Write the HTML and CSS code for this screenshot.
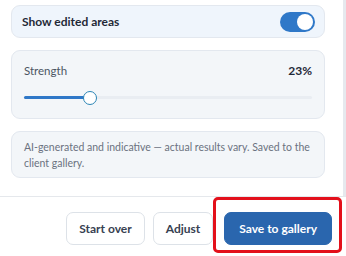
FILE: index.html
```html
<!DOCTYPE html>
<html>
<head>
<meta charset="utf-8">
<link rel="stylesheet" href="styles.css">
</head>
<body>
<div class="panel">
  <div class="body-row">
    <div class="scroll">
      <div class="card card-toggle">
        <span class="toggle-label">Show edited areas</span>
        <span class="switch"><span class="knob"></span></span>
      </div>
      <div class="card card-slider">
        <div class="slider-head">
          <span class="slider-label">Strength</span>
          <span class="slider-value">23%</span>
        </div>
        <div class="track">
          <div class="fill" style="width: 23%"></div>
          <div class="thumb" style="left: 23%"></div>
        </div>
      </div>
      <div class="card card-note">
        AI-generated and indicative — actual results vary. Saved to the client gallery.
      </div>
    </div>
    <div class="scrollbar"></div>
  </div>
  <div class="footer">
    <button class="btn">Start over</button>
    <button class="btn">Adjust</button>
    <button class="btn btn-primary">Save to gallery</button>
    <div class="highlight"></div>
  </div>
</div>
</body>
</html>
```

FILE: styles.css
```css
* { box-sizing: border-box; }
html, body {
  margin: 0;
  padding: 0;
  background: #ffffff;
  font-family: "Lato", "Noto Sans", sans-serif;
  width: 346px;
  height: 256px;
  overflow: hidden;
}
.panel {
  display: flex;
  flex-direction: column;
  height: 256px;
}
.body-row {
  display: flex;
  height: 196px;
}
.scroll {
  flex: 1;
  display: flex;
  flex-direction: column;
  gap: 12px;
  padding: 5px 18px 0 11px;
}
.scrollbar {
  width: 3px;
  background: #e6e9ee;
}
.card {
  border: 1px solid #e3e8ef;
  border-radius: 9px;
  background: #f3f6f9;
}
.card-toggle {
  height: 33px;
  background: #eff5fc;
  display: flex;
  align-items: center;
  justify-content: space-between;
  padding: 0 9px 0 10px;
}
.toggle-label {
  font-size: 12px;
  font-weight: 700;
  color: #1f2937;
}
.switch {
  width: 35px;
  height: 20px;
  border-radius: 10px;
  background: #2f78c8;
  display: flex;
  align-items: center;
  justify-content: flex-end;
  padding: 2px;
}
.knob {
  width: 16px;
  height: 16px;
  border-radius: 50%;
  background: #ffffff;
}
.card-slider {
  height: 69px;
  padding: 12px 12px 0 12px;
}
.slider-head {
  display: flex;
  justify-content: space-between;
  align-items: center;
  height: 15px;
}
.slider-label {
  font-size: 11.5px;
  color: #4b5563;
}
.slider-value {
  font-size: 12px;
  font-weight: 700;
  color: #1f2937;
}
.track {
  position: relative;
  margin-top: 18px;
  height: 3px;
  border-radius: 2px;
  background: #e9edf2;
}
.fill {
  height: 3px;
  border-radius: 2px;
  background: #2f78c8;
}
.thumb {
  position: absolute;
  top: -5.5px;
  width: 14px;
  height: 14px;
  margin-left: -7px;
  border-radius: 50%;
  background: #ffffff;
  border: 1.5px solid #2b85b5;
}
.card-note {
  height: 47px;
  padding: 7px 12px;
  font-size: 10.5px;
  line-height: 16px;
  color: #6b7280;
}
.footer {
  position: relative;
  flex: 1;
  border-top: 1px solid #e5e8ec;
  display: flex;
  justify-content: flex-end;
  align-items: flex-start;
  gap: 8px;
  padding: 15px 14px 0 0;
}
.btn {
  height: 33px;
  padding: 0 12px;
  border: 1px solid #dde2e8;
  border-radius: 7px;
  background: #ffffff;
  font-family: "Lato", "Noto Sans", sans-serif;
  font-size: 12px;
  font-weight: 700;
  color: #374151;
}
.btn-primary {
  margin-left: 3px;
  background: #2a66ae;
  border-color: #2a66ae;
  color: #ffffff;
  padding: 0 14px;
}
.highlight {
  position: absolute;
  left: 213px;
  top: 0px;
  width: 129px;
  height: 56px;
  border: 3px solid #e3101b;
  border-radius: 5px;
}
```
